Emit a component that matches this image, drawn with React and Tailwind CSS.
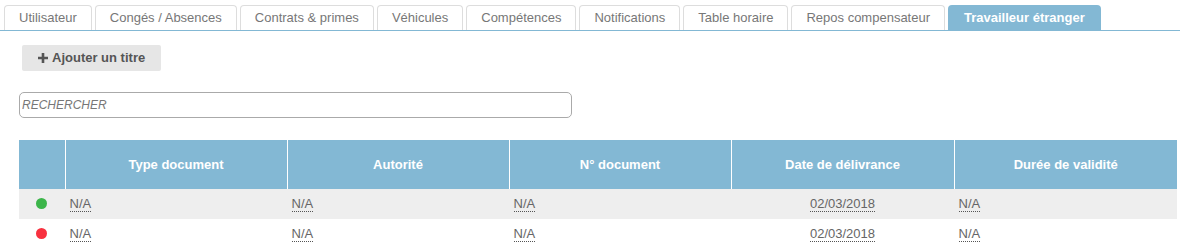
import React from "react";

const tabs = [
  "Utilisateur",
  "Congés / Absences",
  "Contrats & primes",
  "Véhicules",
  "Compétences",
  "Notifications",
  "Table horaire",
  "Repos compensateur",
  "Travailleur étranger",
];

const columns = ["Type document", "Autorité", "N° document", "Date de délivrance", "Durée de validité"];

const rows = [
  { status: "bg-[#3cb54a]", date: "02/03/2018" },
  { status: "bg-[#f8313f]", date: "02/03/2018" },
];

function Dotted({ children }) {
  return <span className="border-b border-dotted border-[#555] leading-[14px]">{children}</span>;
}

export default function App() {
  return (
    <div className="w-[1180px] h-[252px] bg-white font-['Liberation_Sans',Arial,sans-serif] text-[13px] overflow-hidden">
      {/* Tabs */}
      <ul className="flex gap-[3px] pl-[4px] pt-[5px] border-b border-[#83b8d4]">
        {tabs.map((t, i) => {
          const active = i === tabs.length - 1;
          return (
            <li
              key={t}
              className={
                active
                  ? "h-[25px] px-[16px] flex items-center rounded-t-[4px] bg-[#83b8d4] text-white font-bold"
                  : "h-[25px] px-[14px] flex items-center rounded-t-[4px] border border-b-0 border-[#dddddd] text-[#777]"
              }
            >
              {t}
            </li>
          );
        })}
      </ul>

      <div className="pl-[19px]">
        {/* Add button */}
        <button className="mt-[14px] ml-[3px] h-[26px] px-[16px] flex items-center gap-[4px] rounded-[2px] bg-[#e6e6e6] text-[#555] font-bold">
          <svg width="10" height="10" viewBox="0 0 10 10">
            <path d="M3.7 0h2.6v3.7H10v2.6H6.3V10H3.7V6.3H0V3.7h3.7z" fill="#555" />
          </svg>
          Ajouter un titre
        </button>

        {/* Search */}
        <div className="mt-[21px] w-[553px] h-[26px] rounded-[5px] border border-[#aaa] flex items-center px-[2px]">
          <input
            className="w-full outline-none bg-transparent text-[12px] italic placeholder:text-[#777]"
            placeholder="RECHERCHER"
          />
        </div>

        {/* Table */}
        <table className="mt-[22px] w-[1158px] table-fixed border-collapse">
          <colgroup>
            <col className="w-[46px]" />
            <col className="w-[222px]" />
            <col className="w-[222px]" />
            <col className="w-[222px]" />
            <col className="w-[223px]" />
            <col className="w-[223px]" />
          </colgroup>
          <thead>
            <tr className="h-[49px] bg-[#83b8d4] text-white font-bold">
              <th className="p-0" />
              {columns.map((c) => (
                <th key={c} className="p-0 border-l border-white text-center font-bold">
                  {c}
                </th>
              ))}
            </tr>
          </thead>
          <tbody className="text-[#666]">
            {rows.map((r, i) => (
              <tr key={i} className={i === 0 ? "h-[30px] bg-[#eeeeee]" : "h-[30px] bg-white"}>
                <td className="p-0 align-middle">
                  <div className={`mx-auto -mt-[2px] w-[11px] h-[11px] rounded-full ${r.status}`} />
                </td>
                <td className="pl-[4px] border-l border-transparent">
                  <Dotted>N/A</Dotted>
                </td>
                <td className="pl-[4px] border-l border-transparent">
                  <Dotted>N/A</Dotted>
                </td>
                <td className="pl-[4px] border-l border-transparent">
                  <Dotted>N/A</Dotted>
                </td>
                <td className="text-center border-l border-transparent">
                  <Dotted>{r.date}</Dotted>
                </td>
                <td className="pl-[4px] border-l border-transparent">
                  <Dotted>N/A</Dotted>
                </td>
              </tr>
            ))}
          </tbody>
        </table>
      </div>
    </div>
  );
}
